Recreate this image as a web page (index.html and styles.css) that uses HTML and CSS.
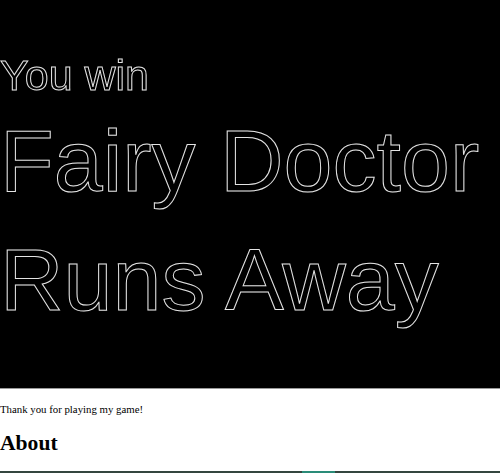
FILE: index.html
```html
<!DOCTYPE html>
<html>
<head>
<meta charset="utf-8">
<link rel="stylesheet" href="styles.css">
</head>
<body>
<div class="page">
  <section class="stage">
    <div class="line small">You win</div>
    <div class="line big">Fairy Doctor</div>
    <div class="line big">Runs Away</div>
  </section>
  <p class="thanks">Thank you for playing my game!</p>
  <h2 class="about">About</h2>
  <div class="bar"><span class="thumb"></span></div>
</div>
</body>
</html>
```

FILE: styles.css
```css
html, body {
  margin: 0;
  padding: 0;
  background: #ffffff;
}
.page {
  display: flex;
  flex-direction: column;
  min-height: 473px;
  height: 100vh;
  overflow: hidden;
}
.stage {
  background: #000000;
  height: 389px;
  box-sizing: border-box;
  padding-top: 49px;
  border-bottom: 1px solid #9a9a9a;
  flex: none;
}
.line {
  font-family: "Liberation Sans", Arial, sans-serif;
  color: #000000;
  -webkit-text-stroke: 1px #e4e4e4;
  -webkit-font-smoothing: antialiased;
  will-change: transform;
  white-space: nowrap;
}
.small {
  font-size: 43px;
  line-height: 52px;
}
.big {
  font-size: 88px;
  line-height: 119px;
}
.thanks {
  font-family: "Liberation Serif", "Times New Roman", serif;
  font-size: 10.8px;
  line-height: 14px;
  margin: 13px 0 0 0;
  color: #000;
}
.about {
  font-family: "Liberation Serif", "Times New Roman", serif;
  font-weight: bold;
  font-size: 21.6px;
  line-height: 25px;
  margin: 15px 0 0 0;
  color: #000;
}
.bar {
  margin-top: auto;
  height: 2px;
  background: #34463f;
  position: relative;
  flex: none;
}
.thumb {
  position: absolute;
  left: 302px;
  width: 33px;
  top: 0;
  height: 2px;
  background: #2a8c78;
}
```
